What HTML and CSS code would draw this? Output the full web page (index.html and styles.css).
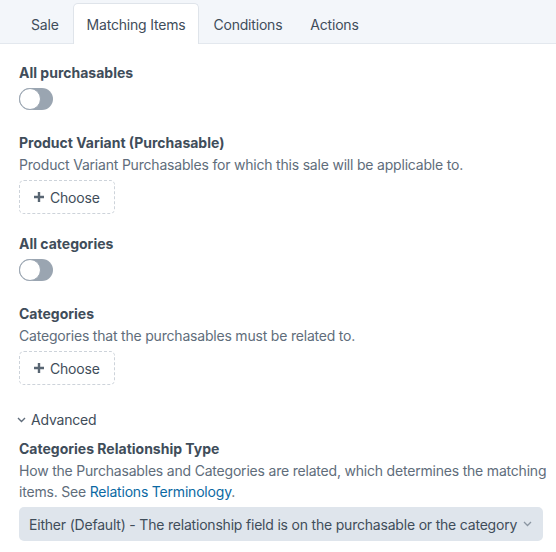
FILE: index.html
```html
<!DOCTYPE html>
<html lang="en">
<head>
    <meta charset="UTF-8">
    <meta name="viewport" content="width=device-width, initial-scale=1.0">
    <title>Matching Items</title>
    <link rel="stylesheet" href="styles.css">
</head>
<body>
    <div class="tabs">
        <a class="tab">Sale</a>
        <a class="tab active">Matching Items</a>
        <a class="tab">Conditions</a>
        <a class="tab">Actions</a>
    </div>

    <div class="content">
        <div class="field field-toggle">
            <div class="label">All purchasables</div>
            <div class="lightswitch"><span class="knob"></span></div>
        </div>

        <div class="field">
            <div class="label">Product Variant (Purchasable)</div>
            <div class="instructions">Product Variant Purchasables for which this sale will be applicable to.</div>
            <button class="choose">
                <svg width="10" height="10" viewBox="0 0 10 10"><path d="M5 0v10M0 5h10" stroke="#596673" stroke-width="2.4"/></svg>
                Choose
            </button>
        </div>

        <div class="field field-toggle">
            <div class="label">All categories</div>
            <div class="lightswitch"><span class="knob"></span></div>
        </div>

        <div class="field">
            <div class="label">Categories</div>
            <div class="instructions">Categories that the purchasables must be related to.</div>
            <button class="choose">
                <svg width="10" height="10" viewBox="0 0 10 10"><path d="M5 0v10M0 5h10" stroke="#596673" stroke-width="2.4"/></svg>
                Choose
            </button>
        </div>

        <div class="advanced">
            <svg class="chevron" width="9" height="6" viewBox="0 0 9 6"><path d="M1 1l3.5 3.5L8 1" fill="none" stroke="#606d7b" stroke-width="1.4"/></svg>
            Advanced
        </div>

        <div class="field">
            <div class="label">Categories Relationship Type</div>
            <div class="instructions">How the Purchasables and Categories are related, which determines the matching items. See <a href="#" class="link">Relations Terminology</a>.</div>
            <div class="select">
                <span>Either (Default) - The relationship field is on the purchasable or the category</span>
                <svg width="9" height="6" viewBox="0 0 9 6"><path d="M1 1l3.5 3.5L8 1" fill="none" stroke="#8b96a2" stroke-width="1.3"/></svg>
            </div>
        </div>
    </div>
</body>
</html>
```

FILE: styles.css
```css
body {
    margin: 0;
    font-family: 'Inter', 'Noto Sans', sans-serif;
    font-size: 14px;
    letter-spacing: -0.2px;
    color: #3f4d5a;
    background: #ffffff;
}

.tabs {
    display: flex;
    align-items: flex-end;
    height: 44px;
    padding-left: 17px;
    background: #f3f6fa;
    border-bottom: 1px solid #e3e8ee;
    box-sizing: border-box;
}

.tab {
    display: flex;
    align-items: center;
    height: 39px;
    padding: 0 13px;
    color: #3f4d5a;
    margin-bottom: -1px;
    border: 1px solid transparent;
    border-bottom: none;
    border-radius: 5px 5px 0 0;
}

.tab.active {
    background: #ffffff;
    border-color: #dfe4ea;
    height: 40px;
}

.content {
    padding: 19px 6px 0 19px;
}

.field {
    margin-bottom: 20px;
}

.field-toggle {
    margin-bottom: 23px;
}

.label {
    font-weight: 700;
    line-height: 20px;
    letter-spacing: 0;
}

.instructions {
    color: #606d7b;
    line-height: 21px;
    margin-top: 1px;
}

.lightswitch {
    width: 34px;
    height: 22px;
    margin-top: 5px;
    border-radius: 11px;
    background: #9aa5b1;
    position: relative;
}

.lightswitch .knob {
    position: absolute;
    left: 0;
    top: 0;
    width: 20px;
    height: 20px;
    border-radius: 50%;
    background: #ffffff;
    border: 1px solid #9aa5b1;
}

.choose {
    display: flex;
    align-items: center;
    gap: 6px;
    margin-top: 5px;
    height: 34px;
    padding: 0 14px;
    font: inherit;
    letter-spacing: -0.2px;
    color: #3f4d5a;
    background: #ffffff;
    border: 1px dashed #cdd3da;
    border-radius: 5px;
}

.advanced {
    display: flex;
    align-items: center;
    gap: 5px;
    margin-top: 25px;
    margin-left: -2px;
    margin-bottom: 9px;
    line-height: 20px;
    color: #3f4d5a;
}

.link {
    color: #0b69a3;
    text-decoration: none;
}

.select {
    display: inline-flex;
    align-items: center;
    gap: 6px;
    margin-top: 5px;
    height: 34px;
    padding: 0 11px 0 10px;
    background: #dfe5ec;
    border-radius: 5px;
    white-space: nowrap;
}
```
